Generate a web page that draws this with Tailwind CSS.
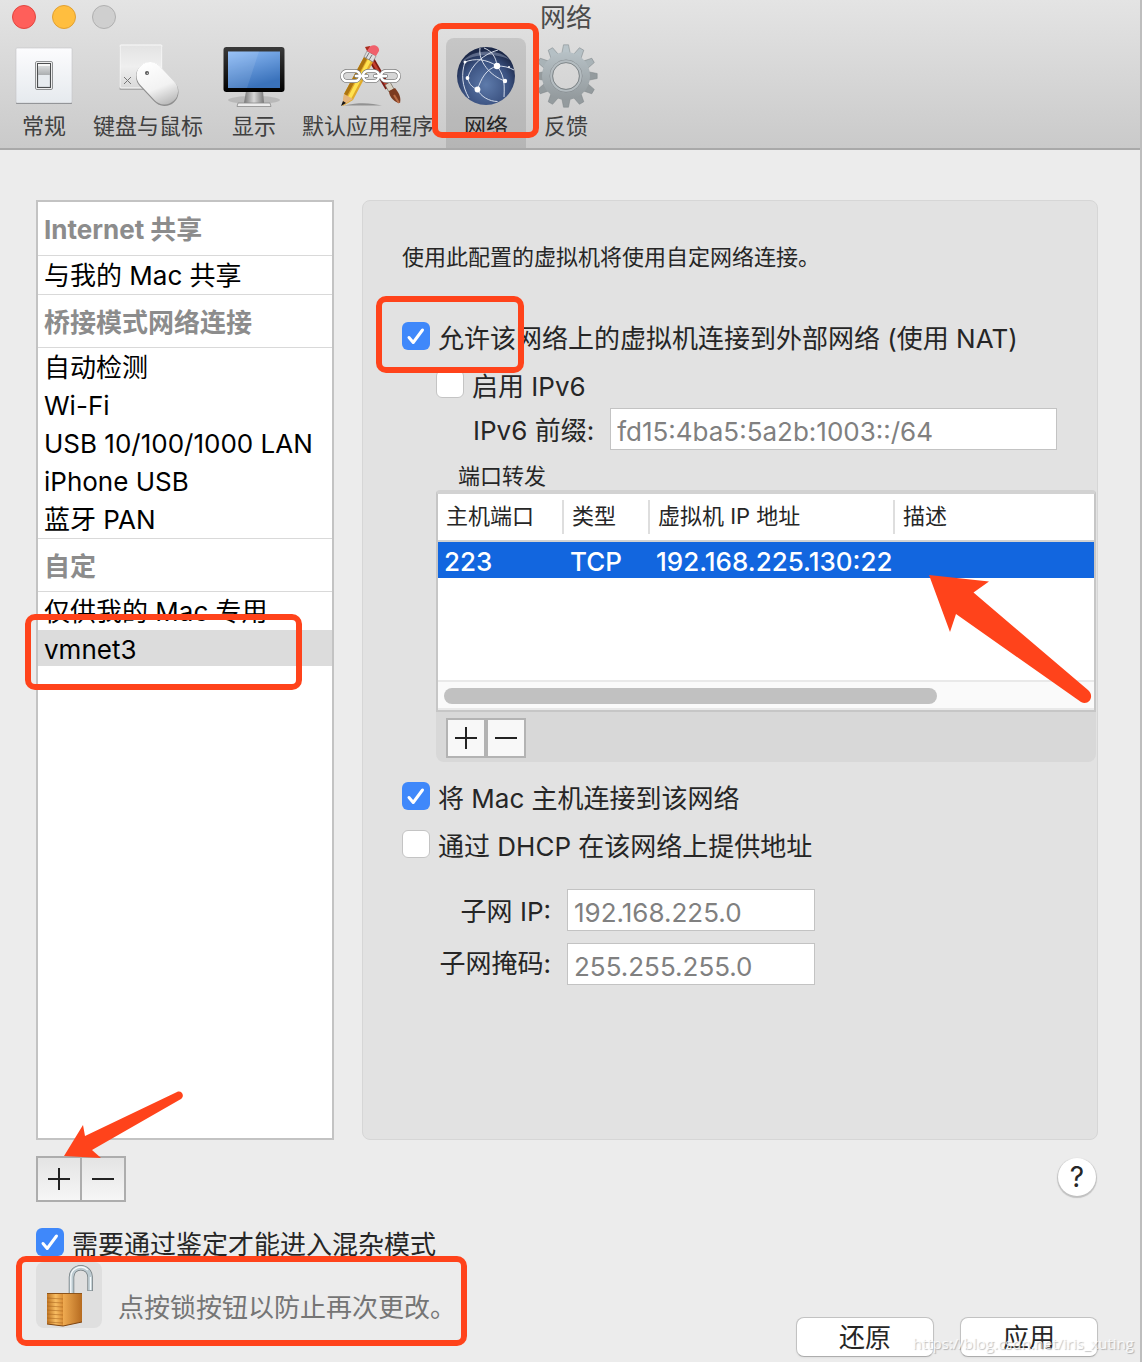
<!DOCTYPE html>
<html lang="zh-CN">
<head>
  <meta charset="UTF-8" />
  <meta name="viewport" content="width=device-width, initial-scale=1.0" />
  <title>网络</title>
  <script src="https://cdn.jsdelivr.net/npm/@tailwindcss/browser@4"></script>
</head>
<body class="bg-[#ececec] font-[Inter,'Noto_Sans_CJK_SC',sans-serif] text-[#262626]">
  <div class="flex min-h-screen flex-col overflow-hidden border-r-2 border-[#bdbdbd]">

    <!-- title bar + toolbar -->
    <header class="border-b-2 border-[#a9a9a9] bg-linear-to-b from-[#e4e4e4] to-[#cacaca]">
      <div class="grid h-8 grid-cols-[1fr_auto_1fr] items-center pr-2">
        <div class="flex gap-4 pl-3">
          <button aria-label="关闭" class="size-6 rounded-full border border-[#e2463f] bg-[#ff5f5a]"></button>
          <button aria-label="最小化" class="size-6 rounded-full border border-[#e1a032] bg-[#ffbe3f]"></button>
          <button aria-label="缩放" class="size-6 rounded-full border border-[#b0b0b0] bg-[#cfcfcf]"></button>
        </div>
        <h1 class="pt-0.5 text-[26px] leading-8 text-[#4b4b4b]">网络</h1>
      </div>

      <nav class="mt-1.5 flex text-[22px] leading-7 text-[#404040]">
        <button class="flex h-[110px] w-[88px] flex-col items-center gap-1 pt-1.5">
          <svg class="size-16 shrink-0" viewBox="0 0 64 64">
            <defs>
              <linearGradient id="plate" x2="0" y2="1"><stop stop-color="#fcfcfe" /><stop offset="1" stop-color="#e6eaee" /></linearGradient>
              <linearGradient id="knob" x2="0" y2="1"><stop stop-color="#d8dadb" /><stop offset="1" stop-color="#abaeb0" /></linearGradient>
            </defs>
            <rect x="4" y="5" width="56" height="55" rx="1" fill="#7f8285" />
            <rect x="4" y="4" width="56" height="55" rx="1" fill="url(#plate)" stroke="#c3c5c8" stroke-width=".6" />
            <rect x="23.500" y="17.500" width="17" height="28" rx="1.500" fill="#fff" stroke="#8f9193" />
            <rect x="25.500" y="19.500" width="13" height="24" fill="#e7ebef" stroke="#4c4e50" stroke-width="1.200" />
            <path d="M26 20h12v2H26z" fill="#f7f7f7" /><path d="M26 22h12v9H26z" fill="url(#knob)" />
          </svg>
          <span>常规</span>
        </button>
        <button class="flex h-[110px] w-[120px] flex-col items-center gap-1 pt-1.5">
          <svg class="size-16 shrink-0" viewBox="0 0 64 64">
            <defs>
              <linearGradient id="pad" x2="0" y2="1"><stop stop-color="#e3e3e3" /><stop offset=".5" stop-color="#efefef" /><stop offset="1" stop-color="#d9d9d9" /></linearGradient>
              <linearGradient id="mouse" gradientUnits="userSpaceOnUse" x1="30" y1="18" x2="48" y2="62"><stop stop-color="#fff" /><stop offset=".6" stop-color="#f2f2f2" /><stop offset="1" stop-color="#b9b9b9" /></linearGradient>
            </defs>
            <rect x="3.500" y="2" width="43" height="44" rx="1" fill="#a9a9a9" />
            <rect x="4" y="1" width="42" height="43" rx="1" fill="url(#pad)" stroke="#fafafa" />
            <path d="M8 33l7 7M15 33l-7 7" stroke="#777" />
            <path d="M34 32.500L48.500 48" stroke="#8e8e8e" stroke-width="28" stroke-linecap="round" />
            <path d="M34 31.500L48.500 47" stroke="url(#mouse)" stroke-width="27" stroke-linecap="round" />
            <circle cx="31" cy="29" r="2" fill="#555" /><circle cx="31.300" cy="29.300" r=".7" fill="#ddd" />
          </svg>
          <span>键盘与鼠标</span>
        </button>
        <button class="flex h-[110px] w-[92px] flex-col items-center gap-1 pt-1.5">
          <svg class="size-16 shrink-0" viewBox="0 0 64 64">
            <defs>
              <linearGradient id="screen" x2=".4" y2="1"><stop stop-color="#8ebcf7" /><stop offset="1" stop-color="#3a72bb" /></linearGradient>
              <linearGradient id="bezel" x2="0" y2="1"><stop stop-color="#3a3a3a" /><stop offset="1" stop-color="#000" /></linearGradient>
              <linearGradient id="neck" x2="1" y2="0"><stop stop-color="#777" /><stop offset=".5" stop-color="#d8d8d8" /><stop offset="1" stop-color="#777" /></linearGradient>
            </defs>
            <ellipse cx="32" cy="56" rx="26" ry="4" fill="#000" opacity=".12" />
            <path d="M24 47h17l1 12H22z" fill="url(#neck)" />
            <path d="M16 59h32l1 3.500H15z" fill="#ececec" stroke="#8a8a8a" stroke-width=".8" />
            <rect x="1.500" y="3" width="61" height="45" rx="3" fill="url(#bezel)" />
            <rect x="6" y="7.500" width="52" height="36.500" fill="url(#screen)" />
            <path d="M6 7.500h31L25 44H6z" fill="#fff" opacity=".1" />
          </svg>
          <span>显示</span>
        </button>
        <button class="flex h-[110px] w-[136px] flex-col items-center gap-1 pt-1.5 whitespace-nowrap">
          <svg class="h-16 w-[68px] shrink-0" viewBox="-2 0 68 64" fill="none">
            <path d="M8 61.500c18-4 28-2 38 0z" fill="#000" opacity=".3" />
            <path d="M29 3l5-1 4 9-4 2z" fill="#a92c1d" />
            <path d="M34 13l18 31" stroke="#7d1911" stroke-width="6" /><path d="M34 13l17 29" stroke="#c2402d" stroke-width="2.500" />
            <path d="M49 41l5-3 4 7-5 3z" fill="#d9d2c5" stroke="#6d6558" stroke-width=".7" />
            <path d="M53 47l6-3c5 6 6 10 5 15-5 0-11-6-11-12z" fill="#7c3b20" /><path d="M58 51l5 8" stroke="#b96b45" stroke-width="2" />
            <path d="M28 13l9 5-20 38-10 6 1-12z" fill="#e1aa2a" />
            <path d="M28 13l3 2L11 52l-3-2z" fill="#ad7510" /><path d="M32 15l3 2-20 38-3-2z" fill="#ffe24f" />
            <path d="M8 50l9 5-11 7z" fill="#e5b57c" /><path d="M7 57l3 2-5 3z" fill="#151515" />
            <path d="M31 7l9 5-3 6-9-5z" fill="#dedede" stroke="#777" stroke-width=".6" /><path d="M33 9l-3 5M36 11l-3 5" stroke="#777" />
            <path d="M33 4c2-5 11-3 10 3l-3 5-9-5z" fill="#f0616c" />
            <g stroke="#777" stroke-width="3.800"><rect x="6" y="27" width="18" height="10" rx="5" /><rect x="45" y="27" width="18" height="10" rx="5" /><rect x="27" y="27" width="16" height="10" rx="5" /><path d="M20 32h11M39 32h11" stroke-linecap="round" /></g>
            <g stroke="#fff" stroke-width="2.600"><rect x="6" y="27" width="18" height="10" rx="5" /><rect x="45" y="27" width="18" height="10" rx="5" /><rect x="27" y="27" width="16" height="10" rx="5" /><path d="M20 32h11M39 32h11" stroke-linecap="round" /></g>
          </svg>
          <span>默认应用程序</span>
        </button>
        <button aria-current="page" class="relative z-10 ml-2.5 flex h-[110px] w-20 flex-col items-center gap-1 rounded-t-lg bg-black/10 pt-1.5 text-[#262626]">
          <svg class="size-16 shrink-0" viewBox="0 0 64 64" fill="none">
            <defs>
              <radialGradient id="globe" cx=".5" cy=".65" r=".6"><stop stop-color="#5e7bab" /><stop offset=".65" stop-color="#3b5281" /><stop offset="1" stop-color="#1c2848" /></radialGradient>
            </defs>
            <circle cx="32" cy="32" r="29" fill="url(#globe)" />
            <path d="M8 18C18 5 45 4 56 16 44 9 20 9 8 18z" fill="#c6d2e8" opacity=".35" />
            <g stroke="#e5ebf5" stroke-width=".9">
              <path d="M26 4c-2 13 10 28 25 33M43 22C32 25 27 35 23.500 45.500M43 22c6 8 8 14 7 31M43 22C32 15 21 14 11 18M43 22c6 0 12 1 17 4M13.500 34C18 20 30 10 44 6M23.500 45.500C17 43 15 39 13.500 34M11 18c-4 12-3 24 4 36M23.500 45.500c3 7 12 12 20 12M30 4c8 3 12 9 13 18" />
            </g>
            <g fill="#fff"><circle cx="43" cy="22" r="3.200" /><circle cx="51" cy="37" r="2.200" /><circle cx="23.500" cy="45.500" r="2.900" /><circle cx="13.500" cy="34" r="1.900" /><circle cx="11" cy="18" r="1.500" /><circle cx="55" cy="23" r="1" /></g>
          </svg>
          <span>网络</span>
          <span class="pointer-events-none absolute -top-[15px] -left-3.5 h-[115px] w-[107px] rounded-[10px] border-6 border-[#ff431b]"></span>
        </button>
        <button class="flex h-[110px] w-20 flex-col items-center gap-1 pt-1.5">
          <svg class="size-16 shrink-0" viewBox="0 0 64 64" fill="none">
            <defs>
              <linearGradient id="gear" gradientUnits="userSpaceOnUse" x1="32" y1="0" x2="32" y2="64"><stop stop-color="#bdc8cd" /><stop offset="1" stop-color="#8c9295" /></linearGradient>
              <path id="tooth" d="M27.500 11L29.500 .8h5L36.500 11z" />
            </defs>
            <g fill="#949b9e" stroke="#7d8487" stroke-width=".5">
              <use href="#tooth" fill="#b9c4c9" /><use href="#tooth" transform="rotate(30 32 32)" fill="#b5c0c5" /><use href="#tooth" transform="rotate(60 32 32)" fill="#a9b3b7" />
              <use href="#tooth" transform="rotate(90 32 32)" /><use href="#tooth" transform="rotate(120 32 32)" /><use href="#tooth" transform="rotate(150 32 32)" />
              <use href="#tooth" transform="rotate(180 32 32)" /><use href="#tooth" transform="rotate(210 32 32)" /><use href="#tooth" transform="rotate(240 32 32)" />
              <use href="#tooth" transform="rotate(270 32 32)" /><use href="#tooth" transform="rotate(300 32 32)" fill="#a9b3b7" /><use href="#tooth" transform="rotate(330 32 32)" fill="#b5c0c5" />
            </g>
            <circle cx="32" cy="32" r="18.500" stroke="url(#gear)" stroke-width="11" />
            <circle cx="32" cy="32" r="16" stroke="#7c8285" stroke-width=".8" />
            <circle cx="32" cy="32" r="14.800" stroke="#b4bcc0" stroke-width="2" />
            <circle cx="32" cy="32" r="13.400" stroke="#757b7e" stroke-width=".8" />
          </svg>
          <span>反馈</span>
        </button>
      </nav>
    </header>

    <main class="flex flex-1 flex-col pt-[50px] pr-[42px] pb-[5px] pl-9">
      <div class="flex flex-1 gap-7">

        <!-- network list -->
        <aside class="w-[298px] shrink-0 border-2 border-[#c3c3c3] bg-white text-[26px] leading-10 text-black">
          <h2 class="h-[54px] border-b border-[#d9d9d9] px-1.5 pt-2 font-bold text-[#8c8c8c]">Internet 共享</h2>
          <ul>
            <li class="mb-0.5 h-9 px-1.5">与我的 Mac 共享</li>
          </ul>
          <h2 class="h-[54px] border-y border-[#d9d9d9] px-1.5 pt-2 font-bold text-[#8c8c8c]">桥接模式网络连接</h2>
          <ul>
            <li class="mb-0.5 h-9 px-1.5">自动检测</li>
            <li class="mb-0.5 h-9 px-1.5">Wi-Fi</li>
            <li class="mb-0.5 h-9 px-1.5">USB 10/100/1000 LAN</li>
            <li class="mb-0.5 h-9 px-1.5">iPhone USB</li>
            <li class="mb-0.5 h-9 px-1.5">蓝牙 PAN</li>
          </ul>
          <h2 class="h-[54px] border-y border-[#d9d9d9] px-1.5 pt-2 font-bold text-[#8c8c8c]">自定</h2>
          <ul>
            <li class="mb-0.5 h-9 px-1.5">仅供我的 Mac 专用</li>
            <li class="relative h-9 bg-[#dcdcdc] px-1.5">vmnet3
              <span class="pointer-events-none absolute -top-4 -left-[13px] h-[76px] w-[277px] rounded-[10px] border-6 border-[#ff431b]"></span>
            </li>
          </ul>
        </aside>

        <!-- settings of the selected network -->
        <section class="min-w-0 flex-1 rounded-lg border border-[#d6d6d6] bg-[#e2e2e2] pt-10 pl-[39px] text-[26px] leading-7">
          <p class="text-[22px] leading-8">使用此配置的虚拟机将使用自定网络连接。</p>

          <div class="relative mt-[49px] flex h-7 items-start gap-2">
            <span class="relative size-7 shrink-0">
              <input id="nat" type="checkbox" checked class="block size-7 appearance-none rounded-md bg-[#3f88fa]" />
              <svg class="pointer-events-none absolute inset-0" viewBox="0 0 28 28" fill="none" stroke="#fff" stroke-width="3" stroke-linecap="round" stroke-linejoin="round"><path d="M7 15.500l4.200 5L20.500 8" /></svg>
            </span>
            <label for="nat" class="pt-[3px] whitespace-nowrap">允许该网络上的虚拟机连接到外部网络 (使用 NAT)</label>
            <span class="pointer-events-none absolute -top-[26px] -left-[26px] z-10 h-[77px] w-[148px] rounded-[10px] border-6 border-[#ff431b]"></span>
          </div>

          <div class="mt-5 pr-px pl-[34px]">
            <div class="flex h-7 items-start gap-2">
              <input id="ipv6" type="checkbox" class="size-7 shrink-0 appearance-none rounded-md border border-[#c4c4c4] bg-white" />
              <label for="ipv6" class="pt-[3px]">启用 IPv6</label>
            </div>
            <div class="mt-2.5 flex items-center gap-4 pr-[39px] pl-[37px]">
              <label for="prefix" class="shrink-0 pt-1">IPv6 前缀:</label>
              <input id="prefix" type="text" value="fd15:4ba5:5a2b:1003::/64" class="h-[42px] min-w-0 flex-1 border border-[#c3c3c3] bg-white px-1.5 pt-1 text-[#808080]" />
            </div>
            <h3 class="mt-3 pl-[22px] text-[22px] leading-7">端口转发</h3>

            <!-- port forwarding -->
            <div class="relative rounded-lg bg-[#d8d8d8]">
              <div class="flex h-[222px] flex-col rounded-t border-2 border-t-4 border-[#c6c6c6] border-t-[#d2d2d2] bg-white">
                <table class="w-full table-fixed text-left">
                  <thead class="border-b-2 border-[#d2d2d2] text-[22px]">
                    <tr class="h-[47px]">
                      <th class="w-[126px] p-0 font-normal"><div class="h-[34px] border-r-2 border-[#dedede] pt-0.5 pl-2">主机端口</div></th>
                      <th class="w-[86px] p-0 font-normal"><div class="h-[34px] border-r-2 border-[#dedede] pt-0.5 pl-2">类型</div></th>
                      <th class="w-[245px] p-0 font-normal"><div class="h-[34px] border-r-2 border-[#dedede] pt-0.5 pl-2">虚拟机 IP 地址</div></th>
                      <th class="p-0 font-normal"><div class="h-[34px] pt-0.5 pl-2">描述</div></th>
                    </tr>
                  </thead>
                  <tbody class="font-medium text-white">
                    <tr class="h-[37px] bg-[#1266df]">
                      <td class="p-0 pt-1 pl-1.5">223</td>
                      <td class="p-0 pt-1 pl-1.5">TCP</td>
                      <td class="p-0 pt-1 pl-1.5 whitespace-nowrap">192.168.225.130:22</td>
                      <td></td>
                    </tr>
                  </tbody>
                </table>
                <div class="mt-auto h-[30px] border-t-2 border-b-2 border-[#e9e9e9] bg-[#fafafa] px-1.5 pt-1.5">
                  <div class="h-4 w-[493px] rounded-full bg-[#c1c1c1]"></div>
                </div>
              </div>
              <div class="flex h-[50px] pt-1.5 pl-2.5">
                <button aria-label="添加端口" class="size-10 border-2 border-[#b3b3b3] bg-[#f8f8f8] p-[7px]"><svg viewBox="0 0 22 22" stroke="#222" stroke-width="2"><path d="M0 11h22M11 0v22" /></svg></button>
                <button aria-label="删除端口" class="size-10 border-2 border-[#b3b3b3] bg-[#f8f8f8] p-[7px]"><svg viewBox="0 0 22 22" stroke="#222" stroke-width="2"><path d="M0 11h22" /></svg></button>
              </div>
              <svg class="pointer-events-none absolute top-[84px] right-0 h-[132px] w-[168px]" viewBox="928 574 168 132"><path d="M929 575l60 6.500-15.500 11L1088 690c7 6 1 16-7 12L956 614l-6 18z" fill="#ff431b" /></svg>
            </div>
          </div>

          <div class="mt-5 flex h-7 items-start gap-2">
            <span class="relative size-7 shrink-0">
              <input id="host" type="checkbox" checked class="block size-7 appearance-none rounded-md bg-[#3f88fa]" />
              <svg class="pointer-events-none absolute inset-0" viewBox="0 0 28 28" fill="none" stroke="#fff" stroke-width="3" stroke-linecap="round" stroke-linejoin="round"><path d="M7 15.500l4.200 5L20.500 8" /></svg>
            </span>
            <label for="host" class="pt-[3px]">将 Mac 主机连接到该网络</label>
          </div>
          <div class="mt-5 flex h-7 items-start gap-2">
            <input id="dhcp" type="checkbox" class="size-7 shrink-0 appearance-none rounded-md border border-[#c4c4c4] bg-white" />
            <label for="dhcp" class="pt-[3px]">通过 DHCP 在该网络上提供地址</label>
          </div>

          <div class="mt-[31px] grid grid-cols-[149px_248px] items-center gap-x-4 gap-y-3">
            <label for="subnet" class="pt-1 text-right">子网 IP:</label>
            <input id="subnet" type="text" value="192.168.225.0" class="h-[42px] border border-[#c3c3c3] bg-white px-1.5 pt-1 text-[#808080]" />
            <label for="mask" class="text-right">子网掩码:</label>
            <input id="mask" type="text" value="255.255.255.0" class="h-[42px] border border-[#c3c3c3] bg-white px-1.5 pt-1 text-[#808080]" />
          </div>
        </section>
      </div>

      <div class="relative mt-4 flex items-start justify-between">
        <div class="flex h-[46px] border-2 border-[#adadad] bg-linear-to-b from-[#e4e4e4] to-[#f6f6f6]">
          <button aria-label="添加网络" class="w-11 border-r-2 border-[#adadad] px-2.5"><svg viewBox="0 0 22 22" stroke="#222" stroke-width="2"><path d="M0 11h22M11 0v22" /></svg></button>
          <button aria-label="删除网络" class="w-[42px] px-2.5"><svg viewBox="0 0 22 22" stroke="#222" stroke-width="2"><path d="M0 11h22" /></svg></button>
        </div>
        <button class="mt-0.5 mr-0.5 size-[38px] rounded-full bg-white text-[28px] leading-[38px] shadow-[0_1px_1px_1px_#c0c0c0]">?</button>
        <svg class="pointer-events-none absolute -top-[66px] left-7 h-[70px] w-[120px]" viewBox="64 1090 120 70"><path d="M64 1156l19-31 2 11 92-44c5-2 8 4 4 7l-89 51 9 8z" fill="#ff431b" /></svg>
      </div>

      <div class="mt-[26px] flex h-7 items-start gap-2 text-[26px] leading-7">
        <span class="relative size-7 shrink-0">
          <input id="promiscuous" type="checkbox" checked class="block size-7 appearance-none rounded-md bg-[#3f88fa]" />
          <svg class="pointer-events-none absolute inset-0" viewBox="0 0 28 28" fill="none" stroke="#fff" stroke-width="3" stroke-linecap="round" stroke-linejoin="round"><path d="M7 15.500l4.200 5L20.500 8" /></svg>
        </span>
        <label for="promiscuous" class="pt-[3px]">需要通过鉴定才能进入混杂模式</label>
      </div>

      <div class="mt-1.5 flex items-start justify-between text-[26px] leading-7">
        <div class="relative flex gap-4">
          <button aria-label="锁定" class="size-[66px] rounded-lg bg-[#dfdfdf]">
            <svg viewBox="0 0 66 66" fill="none">
              <defs>
                <linearGradient id="brassA" x2="1" y2="0"><stop stop-color="#bf7422" /><stop offset=".55" stop-color="#f8bd62" /><stop offset="1" stop-color="#d88c35" /></linearGradient>
                <linearGradient id="brassB" x2="1" y2="0"><stop stop-color="#efab51" /><stop offset="1" stop-color="#b66b20" /></linearGradient>
              </defs>
              <path d="M35.500 32V15a9.300 9.300 0 0 1 18.600 0v14" stroke="#737d81" stroke-width="5.500" />
              <path d="M35.500 32V15a9.300 9.300 0 0 1 18.600 0v13.500" stroke="#bdcbd1" stroke-width="4" />
              <path d="M34.800 32V15a10 10 0 0 1 17-7M54.500 15v13" stroke="#f7fbfc" stroke-width="1.300" />
              <path d="M11 32h16v32l-16-2z" fill="url(#brassA)" />
              <path d="M27 32h19v28l-19 4z" fill="url(#brassB)" />
              <path d="M11 36l16 1M11 40l16 1M11 44l16 1M11 48l16 1M11 52l16 1M11 56l16 1M11 60l16 1" stroke="#985412" stroke-width=".9" opacity=".5" />
              <path d="M11 31.500h35" stroke="#8d541b" /><path d="M11 62l16 2 19-4" stroke="#7e4410" />
            </svg>
          </button>
          <p class="pt-8 text-[#757575]">点按锁按钮以防止再次更改。</p>
          <span class="pointer-events-none absolute -top-1.5 -left-5 h-[90px] w-[451px] rounded-[10px] border-6 border-[#ff431b]"></span>
        </div>
        <div class="relative flex gap-[26px] pt-[55px]">
          <button class="h-10 w-[138px] rounded-lg border border-[#c2c2c2] border-b-[#adadad] bg-white pt-0.5 shadow-xs">还原</button>
          <button class="h-10 w-[138px] rounded-lg border border-[#c2c2c2] border-b-[#adadad] bg-white pt-0.5 shadow-xs">应用</button>
          <span class="pointer-events-none absolute -right-9 bottom-0 font-['Open_Sans',sans-serif] text-[15px] leading-7 whitespace-nowrap text-white/80 [text-shadow:1px_1px_1px_#00000040]">https://blog.csdn.net/iris_xuting</span>
        </div>
      </div>
    </main>
  </div>
</body>
</html>
